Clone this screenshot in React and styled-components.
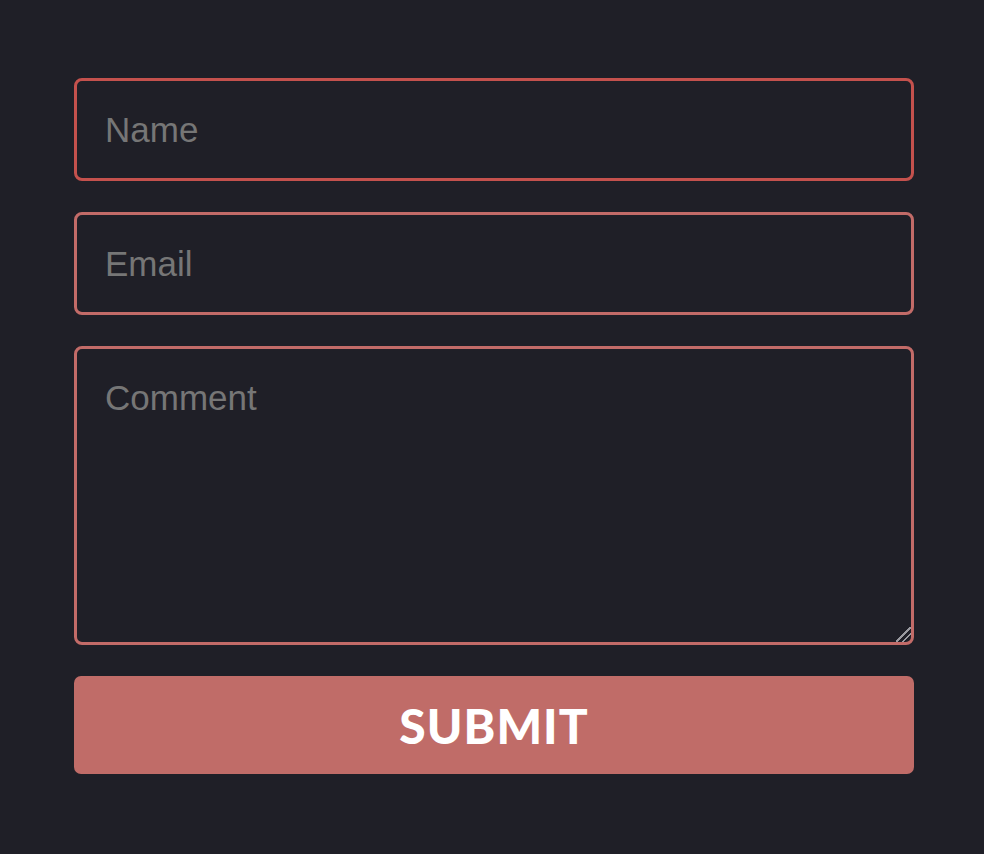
import React from 'react';
import styled, { createGlobalStyle } from 'styled-components';

const GlobalStyle = createGlobalStyle`
  html, body {
    margin: 0;
    background: #1f1f27;
    min-height: 854px;
  }
`;

const Page = styled.div`
  padding: 78px 0 0 74px;
`;

const Form = styled.form`
  width: 840px;
  display: flex;
  flex-direction: column;
  gap: 31px;
`;

const fieldStyles = `
  box-sizing: border-box;
  width: 100%;
  background: #1f1f27;
  border: 3px solid #c26b68;
  border-radius: 8px;
  padding: 0 28px;
  font-family: "Liberation Sans", Arial, sans-serif;
  font-size: 35px;
  color: #e6e6e6;
  outline: none;
  caret-color: #ffffff;

  &::placeholder {
    color: #767676;
  }

  &:focus {
    border-color: #c4514d;
  }
`;

const Input = styled.input`
  ${fieldStyles}
  height: 103px;
`;

const TextArea = styled.textarea`
  ${fieldStyles}
  height: 299px;
  padding-top: 29px;
  resize: vertical;
  display: block;

  &::-webkit-resizer {
    background:
      linear-gradient(135deg,
        transparent 0 46%, #9a9aa0 46% 54%,
        transparent 54% 68%, #9a9aa0 68% 76%,
        transparent 76%);
  }
`;

const SubmitButton = styled.button`
  height: 98px;
  border: none;
  border-radius: 7px;
  background: #c06c68;
  color: #ffffff;
  font-family: Lato, "Open Sans", sans-serif;
  font-weight: 900;
  font-size: 48px;
  letter-spacing: 1px;
  text-transform: uppercase;
  cursor: pointer;
`;

export default function App() {
  return (
    <>
      <GlobalStyle />
      <Page>
        <Form onSubmit={(e) => e.preventDefault()}>
          <Input type="text" placeholder="Name" autoFocus />
          <Input type="email" placeholder="Email" />
          <TextArea placeholder="Comment" />
          <SubmitButton type="submit">Submit</SubmitButton>
        </Form>
      </Page>
    </>
  );
}
